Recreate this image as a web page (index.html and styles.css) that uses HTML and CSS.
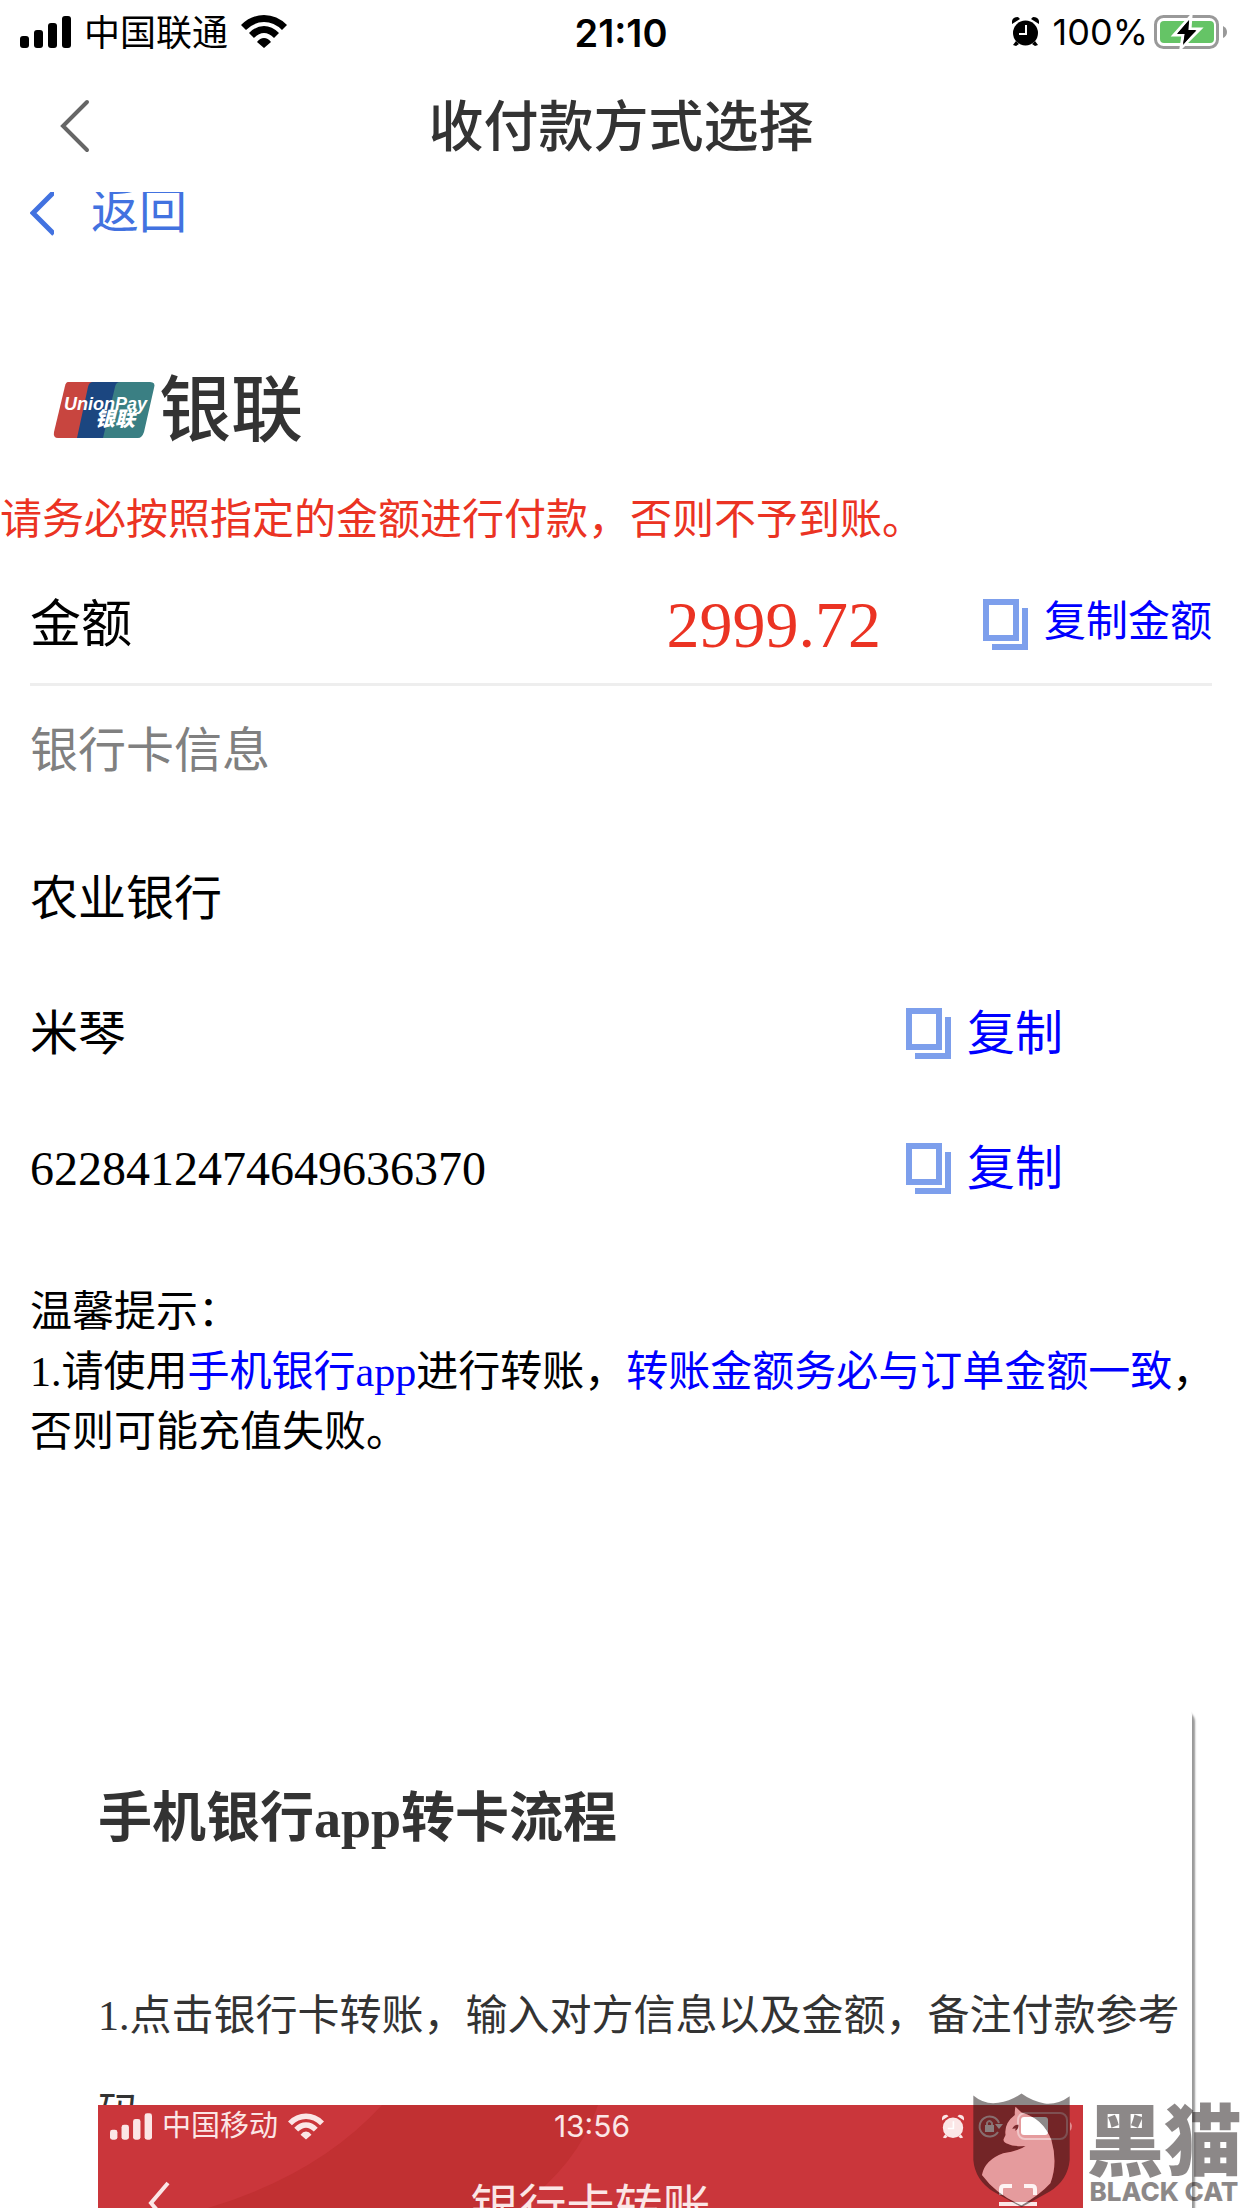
FILE: index.html
```html
<!DOCTYPE html>
<html lang="zh-CN">
<head>
<meta charset="utf-8">
<meta name="viewport" content="width=device-width, initial-scale=1">
<title>收付款方式选择</title>
<link rel="stylesheet" href="styles.css">
</head>
<body>
<svg class="defs" aria-hidden="true">
  <symbol id="signal" viewBox="0 0 51 32">
    <rect x="0" y="20" width="9" height="12" rx="3"/><rect x="14" y="14" width="9" height="18" rx="3"/>
    <rect x="28" y="7" width="9" height="25" rx="3"/><rect x="42" y="0" width="9" height="32" rx="3"/>
  </symbol>
  <symbol id="wifi" viewBox="0 0 46 33">
    <path d="M0 10Q10 0 23 0T46 10L41 15Q33 7 23 7T5 15ZM8 18Q15 11 23 11T38 18L33 23Q28 18 23 18T13 23ZM16 27Q19 23 23 23T30 27L23 33Z"/>
  </symbol>
  <symbol id="alarm" viewBox="0 0 27 29">
    <circle cx="13.500" cy="16" r="12.500"/><path d="M0 7Q-1 0 6 0L8 2ZM27 7Q28 0 21 0L19 2ZM4 24L7 27L4 29L1 28ZM23 24L20 27L23 29L26 28Z"/>
    <path class="alarm-hands" d="M14 8V17H7"/>
  </symbol>
  <symbol id="copy" viewBox="0 0 45 51">
    <path d="M0 0H36V42H0ZM6 6V36H30V6ZM39 9H45V51H9V45H39Z" fill-rule="evenodd"/>
  </symbol>
</svg>

<div class="app">
  <div class="status">
    <div class="status-side status-left">
      <svg class="signal"><use href="#signal"/></svg>
      <span>中国联通</span>
      <svg class="wifi"><use href="#wifi"/></svg>
    </div>
    <time class="clock">21:10</time>
    <div class="status-side status-right">
      <svg class="alarm"><use href="#alarm"/></svg>
      <span>100%</span>
      <svg class="battery" viewBox="0 0 74 34">
        <rect x="1.500" y="1.500" width="62" height="31" rx="8" fill="none" stroke="#999" stroke-width="3"/>
        <rect x="6" y="6" width="54" height="22" rx="4" fill="#65c466"/>
        <path d="M69 11Q73 13 73 17T69 23Z" fill="#999"/>
        <path d="M37 1L20 20H29L27 33L46 14H36Z" fill="#000" stroke="#fff" stroke-width="3"/>
        <path d="M35 5L23 19H31L29 30L42 15H33Z"/>
      </svg>
    </div>
  </div>

  <header class="navbar">
    <button class="nav-back" type="button" aria-label="返回">
      <svg viewBox="0 0 30 54"><path d="M27 3L3 27L27 51"/></svg>
    </button>
    <h1>收付款方式选择</h1>
  </header>

  <main class="webview">
    <a class="back" href="#">
      <svg viewBox="0 0 24 44"><path d="M24 0L3 21L24 42"/></svg>
      <span>返回</span>
    </a>

    <div class="brand">
      <svg class="unionpay" viewBox="0 0 103 56" role="img" aria-label="UnionPay 银联">
        <path d="M15 0H42L26 56H5Q0 56 1 50L12 4Q13 0 15 0Z" fill="#c8453f"/>
        <path d="M40 0H68L52 56H24L35 5Q36 0 40 0Z" fill="#1b4680"/>
        <path d="M67 0H97Q103 0 101 6L91 50Q89 56 85 56H50L62 5Q63 0 67 0Z" fill="#3a7f83"/>
        <text x="11" y="28" class="up-latin">UnionPay</text>
        <text x="42" y="44" class="up-cjk">银联</text>
      </svg>
      <span>银联</span>
    </div>

    <p class="warning">请务必按照指定的金额进行付款，否则不予到账。</p>

    <div class="amount">
      <span class="amount-label">金额</span>
      <span class="amount-value">2999.72</span>
      <button class="copy copy-small" type="button"><svg><use href="#copy"/></svg><span>复制金额</span></button>
    </div>

    <h2 class="section">银行卡信息</h2>
    <div class="row"><span>农业银行</span></div>
    <div class="row"><span>米琴</span><button class="copy" type="button"><svg><use href="#copy"/></svg><span>复制</span></button></div>
    <div class="row"><span>6228412474649636370</span><button class="copy" type="button"><svg><use href="#copy"/></svg><span>复制</span></button></div>

    <div class="tips">
      <p>温馨提示：</p>
      <p>1.请使用<em>手机银行app</em>进行转账，<em>转账金额务必与订单金额一致</em>，否则可能充值失败。</p>
    </div>

    <section class="guide">
      <h2>手机银行app转卡流程</h2>
      <p>1.点击银行卡转账，输入对方信息以及金额，备注付款参考码</p>
      <div class="shot">
        <svg class="shot-bg" viewBox="0 0 985 103" preserveAspectRatio="xMinYMin slice">
          <path d="M284 0H985V103H110Q220 70 284 0Z" fill="#c13032"/>
          <path d="M500 0H985V103H420Q480 60 500 0Z" fill="#ca363b"/>
        </svg>
        <div class="shot-status">
          <div class="shot-side">
            <svg class="signal"><use href="#signal"/></svg>
            <span>中国移动</span>
            <svg class="wifi"><use href="#wifi"/></svg>
          </div>
          <time>13:56</time>
          <div class="shot-side shot-right">
            <svg class="alarm"><use href="#alarm"/></svg>
            <svg class="lock" viewBox="0 0 25 24"><path d="M20 18A10 10 0 1 1 21 9" fill="none" stroke="#f3c9ca" stroke-width="2"/><path d="M17 10H25L21 15Z"/><rect x="7" y="11" width="9" height="7"/><path d="M9 11V9Q11 5 14 9V11" fill="none" stroke="#f3c9ca" stroke-width="2"/></svg>
            <svg class="shot-battery" viewBox="0 0 57 28"><rect x="1" y="1" width="49" height="26" rx="7" fill="none" stroke="#e08d90" stroke-width="2"/><rect x="4" y="5" width="27" height="18" rx="3" fill="#fff"/><path d="M53 10Q57 14 53 19Z" fill="#e08d90"/></svg>
          </div>
        </div>
        <div class="shot-nav">
          <svg class="shot-back" viewBox="0 0 22 44"><path d="M20 2L3 22L20 42"/></svg>
          <strong>银行卡转账</strong>
          <svg class="scan" viewBox="0 0 38 38"><path d="M2 11V5Q2 2 5 2H13M25 2H33Q36 2 36 5V11M0 20H38M2 27V36H13M25 36H36V27"/></svg>
        </div>
      </div>
    </section>
  </main>

  <aside class="watermark">
    <svg class="shield" viewBox="39 39 292 345" aria-hidden="true">
      <path fill="#1c1414" fill-opacity=".5" fill-rule="evenodd" d="M40 46Q75 75 115 68Q155 62 185 40Q215 62 255 70Q295 74 330 48V240Q325 300 270 335L185 382L100 335Q45 300 40 240ZM167 80L185 97Q250 115 275 180Q295 250 272 310Q240 345 185 376Q110 345 66 285Q75 240 130 220Q180 212 197 198Q160 200 145 192Q130 188 131 178L137 165Q132 130 165 105Q164 90 167 80Z"/>
      <path fill="#fff" fill-opacity=".5" d="M167 80L185 97Q250 115 275 180Q295 250 272 310Q240 345 185 376Q110 345 66 285Q75 240 130 220Q180 212 197 198Q160 200 145 192Q130 188 131 178L137 165Q132 130 165 105Q164 90 167 80Z"/>
      <path fill="#7a2a2e" d="M157 146Q164 132 176 134Q176 150 165 152L168 145Z"/>
    </svg>
    <div class="wm-text"><span class="wm-cjk">黑猫</span><span class="wm-latin">BLACK CAT</span></div>
  </aside>
</div>
</body>
</html>
```
FILE: styles.css
```css
* { box-sizing: border-box; }
body, h1, h2, p { margin: 0; }
body { background: #fff; color: #000; }
button { padding: 0; border: 0; background: none; font: inherit; color: inherit; }
svg { display: block; flex: none; }
.defs { position: absolute; width: 0; height: 0; }

.app {
  position: relative;
  display: flex;
  flex-direction: column;
  height: 100vh;
  overflow: hidden;
}

/* phone status bar */
.status {
  display: grid;
  grid-template-columns: 1fr auto 1fr;
  align-items: center;
  height: 60px;
  padding: 0 14px;
  font: 36px/60px Inter, "Noto Sans CJK SC", sans-serif;
}
.status-side { display: flex; align-items: center; gap: 13px; }
.status-left { padding-left: 6px; }
.status-left span { padding-top: 3px; }
.status-right { justify-content: flex-end; gap: 6px; }
.status-right .alarm { margin-right: 8px; }
.clock { padding-top: 3px; font-size: 38px; font-weight: 600; }
.signal { width: 51px; height: 32px; }
.wifi { width: 46px; height: 33px; }
.alarm { width: 27px; height: 29px; }
.alarm-hands { fill: none; stroke: #fff; stroke-width: 2; }
.battery { width: 74px; height: 34px; }

/* native title bar */
.navbar {
  display: grid;
  grid-template-columns: 120px 1fr 120px;
  align-items: center;
  height: 132px;
  color: #333;
}
.nav-back { padding-left: 60px; }
.nav-back svg { width: 30px; height: 54px; }
.nav-back path { fill: none; stroke: #666; stroke-width: 4; stroke-linecap: round; }
.navbar h1 {
  padding-bottom: 8px;
  font: 500 55px/120px "Noto Sans CJK SC", sans-serif;
  text-align: center;
}

/* web page */
.webview {
  display: flex;
  flex: 1;
  flex-direction: column;
  min-height: 0;
  overflow: hidden;
  font: 48px/60px "Liberation Serif", "Noto Sans CJK SC", serif;
}
.back {
  display: flex;
  gap: 37px;
  padding-left: 30px;
  line-height: 40px;
  color: #4272e0;
  text-decoration: none;
}
.back svg { width: 24px; height: 44px; }
.back path { fill: none; stroke: #4272e0; stroke-width: 5; }

.brand {
  display: flex;
  align-items: center;
  gap: 3px;
  height: 100px;
  margin-top: 124px;
  padding-left: 53px;
  font: 500 72px/88px "Noto Sans CJK SC", sans-serif;
  color: #333;
}
.brand span { padding-bottom: 12px; }
.unionpay { width: 103px; height: 56px; }
.up-latin { font: italic 700 18px "Liberation Sans", sans-serif; fill: #fff; }
.up-cjk { font: italic 900 20px "Noto Sans CJK SC", sans-serif; fill: #fff; }

.warning { margin-top: 30px; font-size: 42px; color: #eb3323; }

.amount {
  display: flex;
  align-items: center;
  height: 116px;
  margin: 20px 30px 0;
  padding-bottom: 4px;
  border-bottom: 3px solid #eee;
  line-height: 100px;
}
.amount-label { flex: 1; font-size: 51px; }
.amount-value { margin-right: 102px; font-size: 66px; color: #eb3323; }

.copy { display: flex; align-items: center; gap: 16px; color: #00f; }
.copy svg { width: 45px; height: 51px; fill: #7d9fec; }
.copy-small { font-size: 42px; }
.copy-small span { padding-bottom: 6px; }

.section { margin: 35px 30px 0; font-size: 48px; font-weight: 400; color: #808080; }
.row {
  display: grid;
  grid-template-columns: 876px auto;
  align-items: center;
  min-height: 75px;
  margin: 60px 30px 0;
}
.section + .row { margin-top: 80px; }

.tips { margin: 76px 24px 0 30px; font-size: 42px; }
.tips em { font-style: normal; color: #00f; }

.guide {
  flex: 1;
  min-height: 0;
  margin: 242px 50px 0 0;
  padding: 82px 0 0 98px;
  border-radius: 0 12px 0 0;
  box-shadow: 4px 6px 2px -1px #999;
  color: #333;
}
.guide h2 { font-size: 54px; line-height: 66px; }
.guide p { margin-top: 115px; font-size: 42px; line-height: 98px; }

/* example capture of the bank app */
.shot {
  position: relative;
  height: 330px;
  margin: -58px 109px 0 0;
  overflow: hidden;
  background: #ca363b;
  color: #fbe6e6;
  fill: #fbe6e6;
}
.shot-bg { position: absolute; inset: 0; width: 100%; height: 103px; }
.shot-status, .shot-nav { position: relative; display: grid; align-items: center; }
.shot-status {
  grid-template-columns: 1fr auto 1fr;
  padding: 0 9px 0 12px;
  font: 29px/42px Inter, "Noto Sans CJK SC", sans-serif;
}
.shot-status time { font-size: 30px; }
.shot-side { display: flex; align-items: center; gap: 10px; }
.shot-side .signal { width: 42px; height: 27px; }
.shot-side .wifi { width: 36px; height: 27px; }
.shot-side .alarm { width: 22px; height: 25px; }
.shot-side .lock { width: 25px; height: 24px; }
.shot-side .shot-battery { width: 57px; height: 28px; }
.shot-right { justify-content: flex-end; gap: 14px; }
.shot .alarm-hands { stroke: #ca363b; }
.shot-nav {
  grid-template-columns: 110px 1fr 110px;
  height: 112px;
  font: 48px/60px "Noto Sans CJK SC", sans-serif;
  text-align: center;
}
.shot-nav strong { font-weight: 400; }
.shot-back { width: 22px; height: 44px; margin-left: 50px; }
.shot-nav path { fill: none; stroke: #fbe6e6; stroke-width: 4; }
.scan { width: 38px; height: 38px; margin-left: 26px; }

/* watermark lies over the page corner */
.watermark { position: absolute; right: 0; bottom: 0; display: flex; gap: 16px; }
.shield { width: 97px; height: 115px; }
.wm-text {
  display: flex;
  flex-direction: column;
  align-items: center;
  color: #1c1414;
  opacity: .5;
}
.wm-cjk { font: 900 78px/87px "Noto Sans CJK SC", sans-serif; }
.wm-latin { font: 800 26px/24px Inter, sans-serif; }
```
